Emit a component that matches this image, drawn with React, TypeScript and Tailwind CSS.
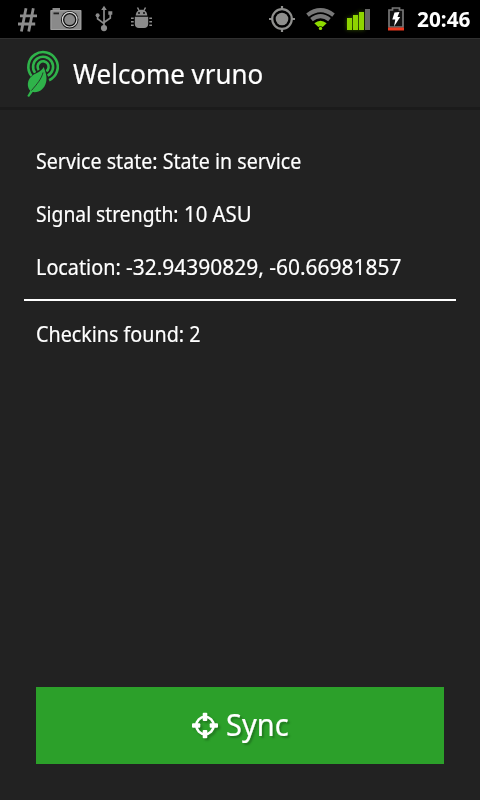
import type { ReactNode } from "react";

function StatusBar() {
  return (
    <div className="flex h-[38px] shrink-0 items-center justify-between bg-black">
      <svg width="160" height="38" viewBox="0 0 160 38" role="img" aria-label="Notifications">
        <g stroke="#8c8c8c" strokeWidth="2.8" fill="none">
          <path d="M26 8.3 21.400 31.500M33.300 8.3 28.700 31.500M20 15.800H37M18 24H35.200" />
        </g>
        <path d="M52.500 8h7.500v2H81.300V30H50.500V10h2z" fill="#8a8a8a" />
        <path d="M51 10.700H80.800V29.500H51z" fill="none" stroke="#a2a2a2" strokeWidth="1" />
        <path d="M53.500 12.500h5.500v1.800h-5.500z" fill="#222" />
        <circle cx="69.700" cy="19.700" r="8.800" fill="#111" />
        <circle cx="69.700" cy="19.700" r="7.300" fill="#111" stroke="#d4d4d4" strokeWidth="1.200" />
        <circle cx="69.700" cy="19.700" r="5.400" fill="#8a8a8a" />
        <g fill="none" stroke="#8c8c8c" strokeWidth="1.700">
          <path d="M104 9V27M97.600 16v2.800l6.400 4.800M110.300 14v4l-6.300 4.500" />
        </g>
        <g fill="#8c8c8c">
          <path d="m104 5.800 2.800 4.200h-5.600zM108.300 11.300h4v3.500h-4z" />
          <circle cx="97.600" cy="15.300" r="2" />
          <circle cx="104" cy="28.100" r="3.100" />
          <path d="M135.700 15.500c.3-3.500 2.400-5.700 5.800-5.700s5.500 2.200 5.800 5.700z" />
          <path d="M134.800 16.700h13.400v7c0 3-1.800 4.300-4 4.300h-5.400c-2.200 0-4-1.300-4-4.300z" />
        </g>
        <path
          d="m137.500 7.500 1.800 3.500M145.500 7.500l-1.800 3.500M131 18.300h2.700M131 21.800h2.700M131 25.300h2.700M149.300 18.300h2.700M149.300 21.800h2.700M149.300 25.300h2.700"
          fill="none"
          stroke="#8c8c8c"
          strokeWidth="1.500"
        />
        <circle cx="139" cy="13" r=".9" />
        <circle cx="144" cy="13" r=".9" />
      </svg>
      <div className="flex h-full">
        <svg width="150" height="38" viewBox="260 0 150 38" role="img" aria-label="Device status">
          <g stroke="#8f8f8d" fill="none" strokeWidth="2.200">
            <circle cx="282" cy="19" r="9.800" />
            <path d="M282 6v4M282 28v4M269 19h4M291 19h4" />
          </g>
          <circle cx="282" cy="19" r="6.300" fill="#8f8f8d" />
          <g fill="none" stroke="#777" strokeWidth="4.200">
            <path d="M307.500 15.200Q320.500 5.200 333.500 15.200" />
            <path d="M311.500 19.700Q320.500 12.700 329.500 19.700" />
          </g>
          <path d="M314.300 23.300Q320.500 18 326.700 23.300L322.700 27Q320.500 25.500 318.300 27z" fill="#8edb00" />
          <circle cx="320.500" cy="28.400" r="1.700" fill="#8edb00" />
          <g fill="#8fd400" className="drop-shadow-[0_0_2px_rgba(120,190,0,0.5)]">
            <path d="M347 18h5v12h-5zM353 15h5v15h-5zM359 12h5v18h-5z" />
          </g>
          <path d="M365 9h5v21h-5z" fill="#666" />
          <path d="M389 10h3.500V8h7v2h3.500v17h-14z" fill="#111" stroke="#777" strokeWidth="1.700" />
          <path d="M388 27.500h16v3h-16z" fill="#ed3a20" />
          <path d="m394.500 12.500 5-.5-2 5h2.700l-6.200 9.500 1.300-7h-3z" fill="#fff" />
        </svg>
        <span className="flex w-[70px] items-center pl-[7px] text-[21px] leading-none font-bold text-white">
          <span className="inline-block origin-left scale-x-[0.99]">20:46</span>
        </span>
      </div>
    </div>
  );
}

function LeafLogo() {
  return (
    <svg className="mt-0.5" width="36" height="50" viewBox="25 49 36 50" role="img" aria-label="Logo">
      <g fill="none" stroke="#2fb34a" strokeWidth="2.600">
        <path d="M31.600 76A14.700 14.700 0 1 1 49.100 80.200" />
        <path d="M35.100 72.800A10 10 0 1 1 47.600 75.700" />
        <path d="M38.700 70.100A5.500 5.500 0 1 1 46.300 71.300" />
      </g>
      <path
        d="M43.700 67C45.500 72 47.500 77 46 82.500 44.500 89 39 93 32.700 92L29 97 27.300 96 30.300 90.700C26.500 87 27 79.500 32.500 75.500 36 73 41 72 43.700 67z"
        fill="#2fb34a"
        stroke="#222"
        strokeWidth="1"
        paintOrder="stroke"
      />
      <path d="M43 72.500C41.500 79 37 84 31.500 90.500" fill="none" stroke="#222" strokeWidth=".8" />
    </svg>
  );
}

function InfoRow({ children }: { children: ReactNode }) {
  return <p className="flex h-[53px] items-center pl-3 text-[22px] whitespace-nowrap">{children}</p>;
}

export default function App() {
  return (
    <div className="flex h-[800px] w-[480px] flex-col overflow-hidden bg-[#222222] font-['Noto_Sans',sans-serif] text-white">
      <StatusBar />
      <header className="flex h-[72px] shrink-0 items-center border-t border-b-[3px] border-t-[#303030] border-b-[#1b1b1b] pl-[25px]">
        <LeafLogo />
        <h1 className="ml-3 origin-left scale-x-[0.96] text-[27px] leading-none whitespace-nowrap [-webkit-text-stroke:0.2px]">
          Welcome vruno
        </h1>
      </header>
      <main className="flex grow flex-col px-6 pt-6 pb-9 [-webkit-text-stroke:0.2px]">
        <InfoRow>
          <span className="origin-left scale-x-[0.893]">Service state: State in service</span>
        </InfoRow>
        <InfoRow>
          <span className="w-[148px] origin-left scale-x-[0.876]">Signal strength:</span>
          <span className="origin-left scale-x-[0.925]">10 ASU</span>
        </InfoRow>
        <InfoRow>
          <span className="w-[90px]">
            <span className="inline-block origin-left scale-x-[0.9]">Location:</span>
          </span>
          <span className="origin-left scale-x-[0.952]">-32.94390829, -60.66981857</span>
        </InfoRow>
        <hr className="mt-1.5 mb-1.5 h-[2px] shrink-0 border-0 bg-white" />
        <InfoRow>
          <span className="origin-left scale-x-[0.896]">Checkins found: 2</span>
        </InfoRow>
        <button className="mx-3 mt-auto flex h-[77px] shrink-0 items-center bg-[#2ca02a] pl-[155px] text-left">
          <svg
            width="28"
            height="28"
            viewBox="0 0 28 28"
            className="drop-shadow-[2px_2px_1px_rgba(0,0,0,0.25)]"
            aria-hidden="true"
          >
            <circle cx="14" cy="13.500" r="8.700" fill="none" stroke="#fff" strokeWidth="2.600" />
            <g fill="#fff">
              <rect x="11.700" y=".7" width="4.600" height="8.300" rx="1" />
              <rect x="11.700" y="18" width="4.600" height="8.300" rx="1" />
              <rect x="1" y="11.200" width="8.300" height="4.600" rx="1" />
              <rect x="18.700" y="11.200" width="8.300" height="4.600" rx="1" />
            </g>
          </svg>
          <span className="relative -top-px ml-[7px] inline-block origin-left scale-x-[0.97] text-[30px] leading-none text-shadow-[2px_2px_2px_rgba(0,0,0,0.25)]">
            Sync
          </span>
        </button>
      </main>
    </div>
  );
}
